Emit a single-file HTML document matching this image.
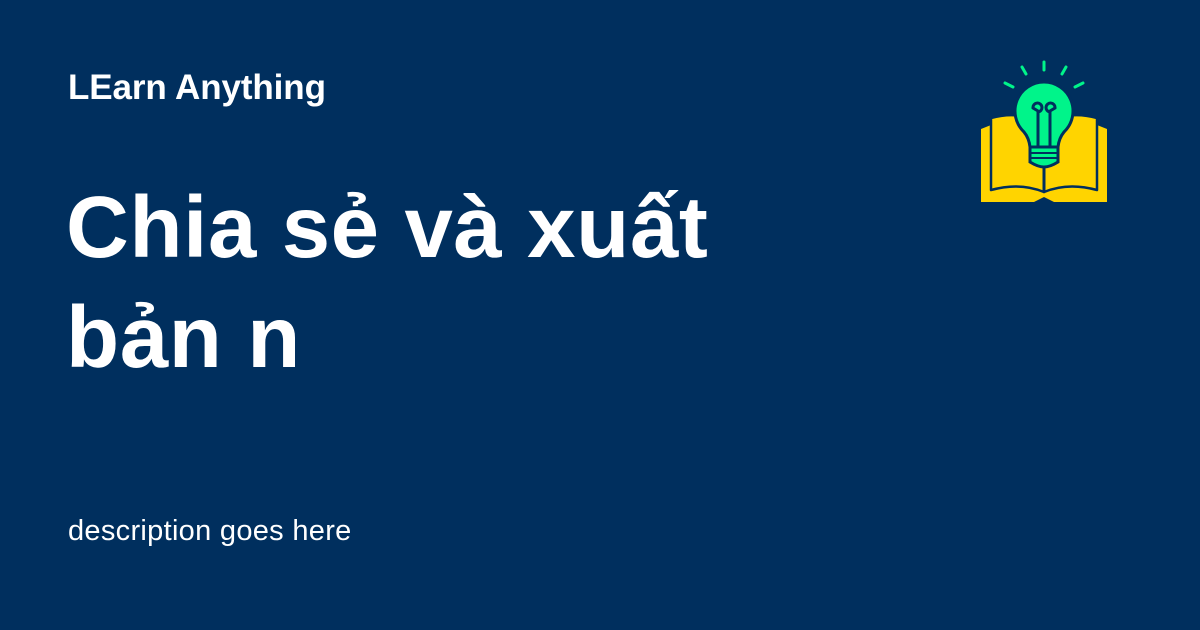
<!DOCTYPE html>
<html><head><meta charset="utf-8"><style>
html,body{margin:0;padding:0}
body{width:1200px;height:630px;background:#002f5e;position:relative;overflow:hidden;font-family:"Liberation Sans",sans-serif;color:#fff}
.brand{position:absolute;left:68px;top:68px;font-size:35px;font-weight:bold;letter-spacing:-0.1px;line-height:40px}
.title{position:absolute;left:66px;top:173px;font-size:87px;font-weight:bold;line-height:110px;letter-spacing:0.6px}
.desc{position:absolute;left:68px;top:514px;font-size:29px;line-height:34px;letter-spacing:0.3px}
svg{position:absolute;left:970px;top:50px}
</style></head><body>
<div class="brand">LEarn Anything</div>
<div class="title">Chia sẻ và xuất<br>bản n</div>
<div class="desc">description goes here</div>
<svg width="150" height="160" viewBox="0 0 150 160">
<path d="M11,79 L21,75 L21,137 Q45,130 74,137 Q103,130 127,137 L127,75 L137,79 L137,152 L84,152 L74,147 L64,152 L11,152 Z" fill="#ffd400"/>
<path d="M21,68 Q50,60 74,74 L74,142 Q50,132 21,140 Z" fill="#ffd400" stroke="#002f5e" stroke-width="2.5" stroke-linejoin="round"/>
<path d="M127,68 Q98,60 74,74 L74,142 Q98,132 127,140 Z" fill="#ffd400" stroke="#002f5e" stroke-width="2.5" stroke-linejoin="round"/>
<path d="M74,32 A29,29 0 0 1 94,82 Q89,88 88,97 L60,97 Q59,88 54,82 A29,29 0 0 1 74,32 Z" fill="#00f48a" stroke="#002f5e" stroke-width="3"/>
<path d="M60,97 L88,97 L88,112 Q80,117 74,117 Q68,117 60,112 Z" fill="#00f48a" stroke="#002f5e" stroke-width="3"/>
<path d="M61,103 H87 M61,108 H87" stroke="#002f5e" stroke-width="2"/>
<path d="M74,117 V142" stroke="#002f5e" stroke-width="3"/>
<g fill="none" stroke="#002f5e" stroke-width="3" stroke-linecap="round">
<path d="M68,97 V62 A4.5,4.5 0 1 0 63,58 L68,61"/>
<path d="M80,97 V62 A4.5,4.5 0 1 1 85,58 L80,61"/>
</g>
<g stroke="#00f48a" stroke-width="3" stroke-linecap="round">
<path d="M74,12 V20 M52,17 L56,24 M96,17 L92,24 M35,33 L43,37 M113,33 L105,37"/>
</g>
</svg>
</body></html>
